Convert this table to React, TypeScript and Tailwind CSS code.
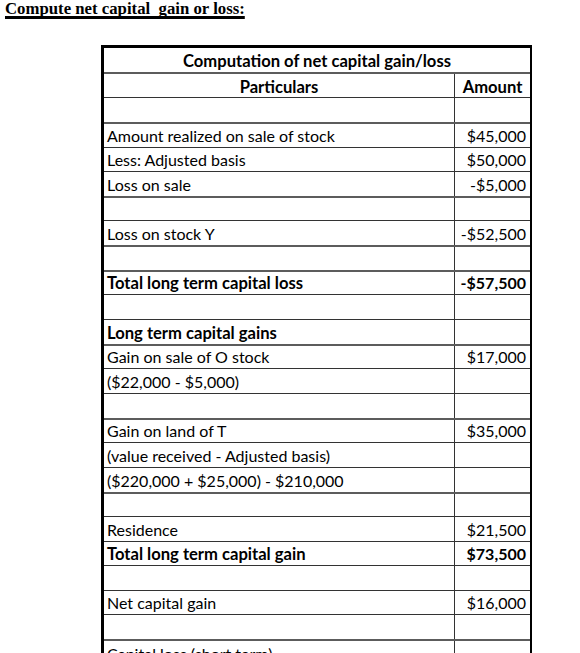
import React from "react";

type Row = {
  label?: string;
  amount?: string;
  bold?: boolean;
  cls: string;
};

const THIN = "border-b border-[#333333]";
const THICK = "border-b-2 border-[#5c5c5c]";

const rows: Row[] = [
  { label: "", amount: "", cls: `h-[26px] ${THICK}` },
  { label: "Amount realized on sale of stock", amount: "$45,000", cls: `h-[24px] ${THIN}` },
  { label: "Less: Adjusted basis", amount: "$50,000", cls: `h-[24px] ${THIN}` },
  { label: "Loss on sale", amount: "-$5,000", cls: `h-[26px] ${THICK}` },
  { label: "", amount: "", cls: `h-[23px] ${THIN}` },
  { label: "Loss on stock Y", amount: "-$52,500", cls: `h-[26px] ${THICK}` },
  { label: "", amount: "", cls: `h-[25px] ${THICK}` },
  { label: "Total long term capital loss", amount: "-$57,500", bold: true, cls: `h-[23px] ${THIN}` },
  { label: "", amount: "", cls: `h-[25px] ${THIN}` },
  { label: "Long term capital gains", amount: "", bold: true, cls: `h-[26px] ${THICK}` },
  { label: "Gain on sale of O stock", amount: "$17,000", cls: `h-[23px] ${THIN}` },
  { label: "($22,000 - $5,000)", amount: "", cls: `h-[25px] ${THIN}` },
  { label: "", amount: "", cls: `h-[26px] ${THICK}` },
  { label: "Gain on land of T", amount: "$35,000", cls: `h-[23px] ${THIN}` },
  { label: "(value received - Adjusted basis)", amount: "", cls: `h-[25px] ${THIN}` },
  { label: "($220,000 + $25,000) - $210,000", amount: "", cls: `h-[26px] ${THICK}` },
  { label: "", amount: "", cls: `h-[23px] ${THIN}` },
  { label: "Residence", amount: "$21,500", cls: `h-[25px] ${THIN}` },
  { label: "Total long term capital gain", amount: "$73,500", bold: true, cls: `h-[24px] ${THIN}` },
  { label: "", amount: "", cls: `h-[25px] ${THIN}` },
  { label: "Net capital gain", amount: "$16,000", cls: `h-[24px] ${THIN}` },
  { label: "", amount: "", cls: `h-[26px] ${THICK}` },
  { label: "Capital loss (short term)", amount: "", cls: `h-[25px] ${THIN}` },
];

export default function App() {
  return (
    <div className="w-[580px] h-[653px] overflow-hidden bg-white text-black">
      <p
        className="pl-[5px] text-[16.75px] leading-[18px] font-bold underline decoration-[3px] underline-offset-[2px] text-black whitespace-pre"
        style={{ fontFamily: '"Liberation Serif", "Times New Roman", serif', textDecorationSkipInk: "none" }}
      >
        {"Compute net capital  gain or loss:"}
      </p>
      <div
        className="ml-[101px] mt-[27px] w-[431px] border-l-[3px] border-t-[3px] border-r-[2px] border-black box-border"
        style={{ fontFamily: 'Lato, "Open Sans", sans-serif' }}
      >
        <div className={`box-border h-[26px] ${THICK} flex items-end justify-center pb-[1px]`}>
          <span className="text-[16.6px] leading-[20px] font-bold">Computation of net capital gain/loss</span>
        </div>
        <div className={`box-border h-[24px] ${THIN} flex`}>
          <div className="w-[351px] border-r border-[#333333] flex items-end justify-center">
            <span className="text-[16.6px] leading-[20px] font-bold">Particulars</span>
          </div>
          <div className="flex-1 flex items-end justify-center">
            <span className="text-[16.6px] leading-[20px] font-bold">Amount</span>
          </div>
        </div>
        {rows.map((r, i) => (
          <div key={i} className={`box-border flex ${r.cls}`}>
            <div className="w-[351px] border-r border-[#333333] flex items-end pl-[3px] pb-[1px] overflow-hidden">
              <span className={`leading-[20px] whitespace-pre ${r.bold ? "font-bold text-[16.6px]" : "text-[16px]"}`}>{r.label}</span>
            </div>
            <div className="flex-1 flex items-end justify-end pr-[4px] pb-[1px]">
              <span className={`leading-[20px] text-[16px] ${r.bold ? "font-bold" : ""}`}>{r.amount}</span>
            </div>
          </div>
        ))}
      </div>
    </div>
  );
}
